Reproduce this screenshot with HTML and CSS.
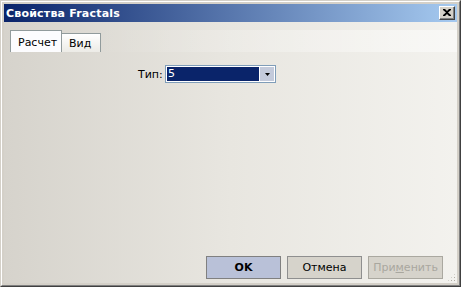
FILE: index.html
```html
<!DOCTYPE html>
<html>
<head>
<meta charset="utf-8">
<link rel="stylesheet" href="styles.css">
</head>
<body>
<div class="win">
  <div class="win-inner">
    <div class="titlebar">
      <span class="title">Свойства Fractals</span>
      <span class="close"><svg width="8" height="7" viewBox="0 0 8 7"><path d="M0 0h2l2 2 2-2h2v1L5 3.5 8 6v1H6L4 5 2 7H0V6l3-2.5L0 1z" fill="#000"/></svg></span>
    </div>
    <div class="body">
      <div class="tabs">
        <div class="tab active">Расчет</div>
        <div class="tab">Вид</div>
      </div>
      <div class="panel">
        <div class="field">
          <span class="label">Тип:</span>
          <div class="combo">
            <div class="combo-value">5</div>
            <div class="combo-btn"><svg width="5" height="3" viewBox="0 0 5 3"><path d="M0 0h5L2.5 3z" fill="#000"/></svg></div>
          </div>
        </div>
      </div>
      <div class="buttons">
        <button class="btn default">OK</button>
        <button class="btn">Отмена</button>
        <button class="btn disabled">При<u>м</u>енить</button>
      </div>
      <div class="grip"></div>
    </div>
  </div>
</div>
</body>
</html>
```
FILE: styles.css
```css
* { box-sizing: border-box; }
html, body { margin: 0; padding: 0; }
body {
  width: 461px;
  height: 287px;
  overflow: hidden;
  font-family: "DejaVu Sans", "Liberation Sans", sans-serif;
  font-size: 11px;
}
.win {
  width: 461px;
  height: 287px;
  border-top: 1px solid #d4d0c8;
  border-left: 1px solid #d4d0c8;
  border-right: 1px solid #404040;
  border-bottom: 1px solid #404040;
}
.win-inner {
  height: 100%;
  border-top: 1px solid #ffffff;
  border-left: 1px solid #ffffff;
  border-right: 1px solid #808080;
  border-bottom: 1px solid #808080;
  padding: 2px;
  background: #d4d0c8;
  display: flex;
  flex-direction: column;
}
.titlebar {
  height: 18px;
  flex: none;
  background: linear-gradient(to right, #0a246a, #a6caf0);
  display: flex;
  align-items: center;
  justify-content: space-between;
  padding: 0 2px 0 2px;
}
.title {
  color: #fff;
  font-weight: bold;
  font-size: 11px;
  letter-spacing: 0.2px;
}
.close {
  width: 16px;
  height: 14px;
  background: #d4d0c8;
  border-top: 1px solid #fff;
  border-left: 1px solid #fff;
  border-right: 1px solid #404040;
  border-bottom: 1px solid #404040;
  box-shadow: inset -1px -1px 0 #808080;
  display: flex;
  align-items: center;
  justify-content: center;
  padding: 0 1px 1px 0;
}
.body {
  flex: 1;
  position: relative;
  background: linear-gradient(to right, #d6d3cc, #e8e6e0 50%, #f3f2ee);
  display: flex;
  flex-direction: column;
  padding-top: 8px;
}
.tabs {
  display: flex;
  align-items: flex-end;
  padding-left: 6px;
  height: 22px;
  background: linear-gradient(to right, rgba(255,255,255,0) 20%, rgba(255,255,255,0.5));
}
.tab {
  height: 19px;
  border: 1px solid #919b9c;
  border-bottom: none;
  background: linear-gradient(#ffffff, #ecebe6);
  padding: 3px 7px 0 7px;
  color: #000;
  width: 40px;
}
.tab.active {
  height: 22px;
  width: 52px;
  background: #fcfcfe;
  padding: 5px 6px 0 7px;
  border-right: 1px solid #919b9c;
  margin-right: -1px;
  position: relative;
  z-index: 1;
}
.panel {
  flex: 1;
  padding-top: 13px;
}
.field {
  display: flex;
  align-items: center;
  padding-left: 134px;
  gap: 4px;
}
.label {
  width: 23px;
  text-align: right;
  color: #000;
}
.combo {
  width: 111px;
  height: 18px;
  border: 1px solid #7f9db9;
  background: #fff;
  display: flex;
  padding: 1px;
}
.combo-value {
  flex: 1;
  background: #0a246a;
  color: #fff;
  padding-left: 1px;
  line-height: 14px;
}
.combo-btn {
  width: 15px;
  background: #c3cadb;
  border-left: 1px solid #fff;
  display: flex;
  align-items: center;
  justify-content: center;
}
.buttons {
  display: flex;
  justify-content: flex-end;
  gap: 6px;
  padding-right: 14px;
  padding-bottom: 4px;
}
.btn {
  width: 75px;
  height: 23px;
  border: 1px solid #8f8f8f;
  background: #d6d3cb;
  font-family: "DejaVu Sans", "Liberation Sans", sans-serif;
  font-size: 11px;
  color: #000;
  padding: 0;
}
.btn.default {
  background: #b9c1d8;
  font-weight: bold;
  border-color: #808080;
}
.btn.disabled {
  color: #a9a79f;
  border-color: #aaa8a0;
}
.grip {
  position: absolute;
  right: 1px;
  bottom: 1px;
  width: 9px;
  height: 9px;
  background:
    radial-gradient(circle, #b0ada5 0.8px, transparent 1px) 0 0 / 3px 3px;
  clip-path: polygon(100% 0, 100% 100%, 0 100%);
}
```
